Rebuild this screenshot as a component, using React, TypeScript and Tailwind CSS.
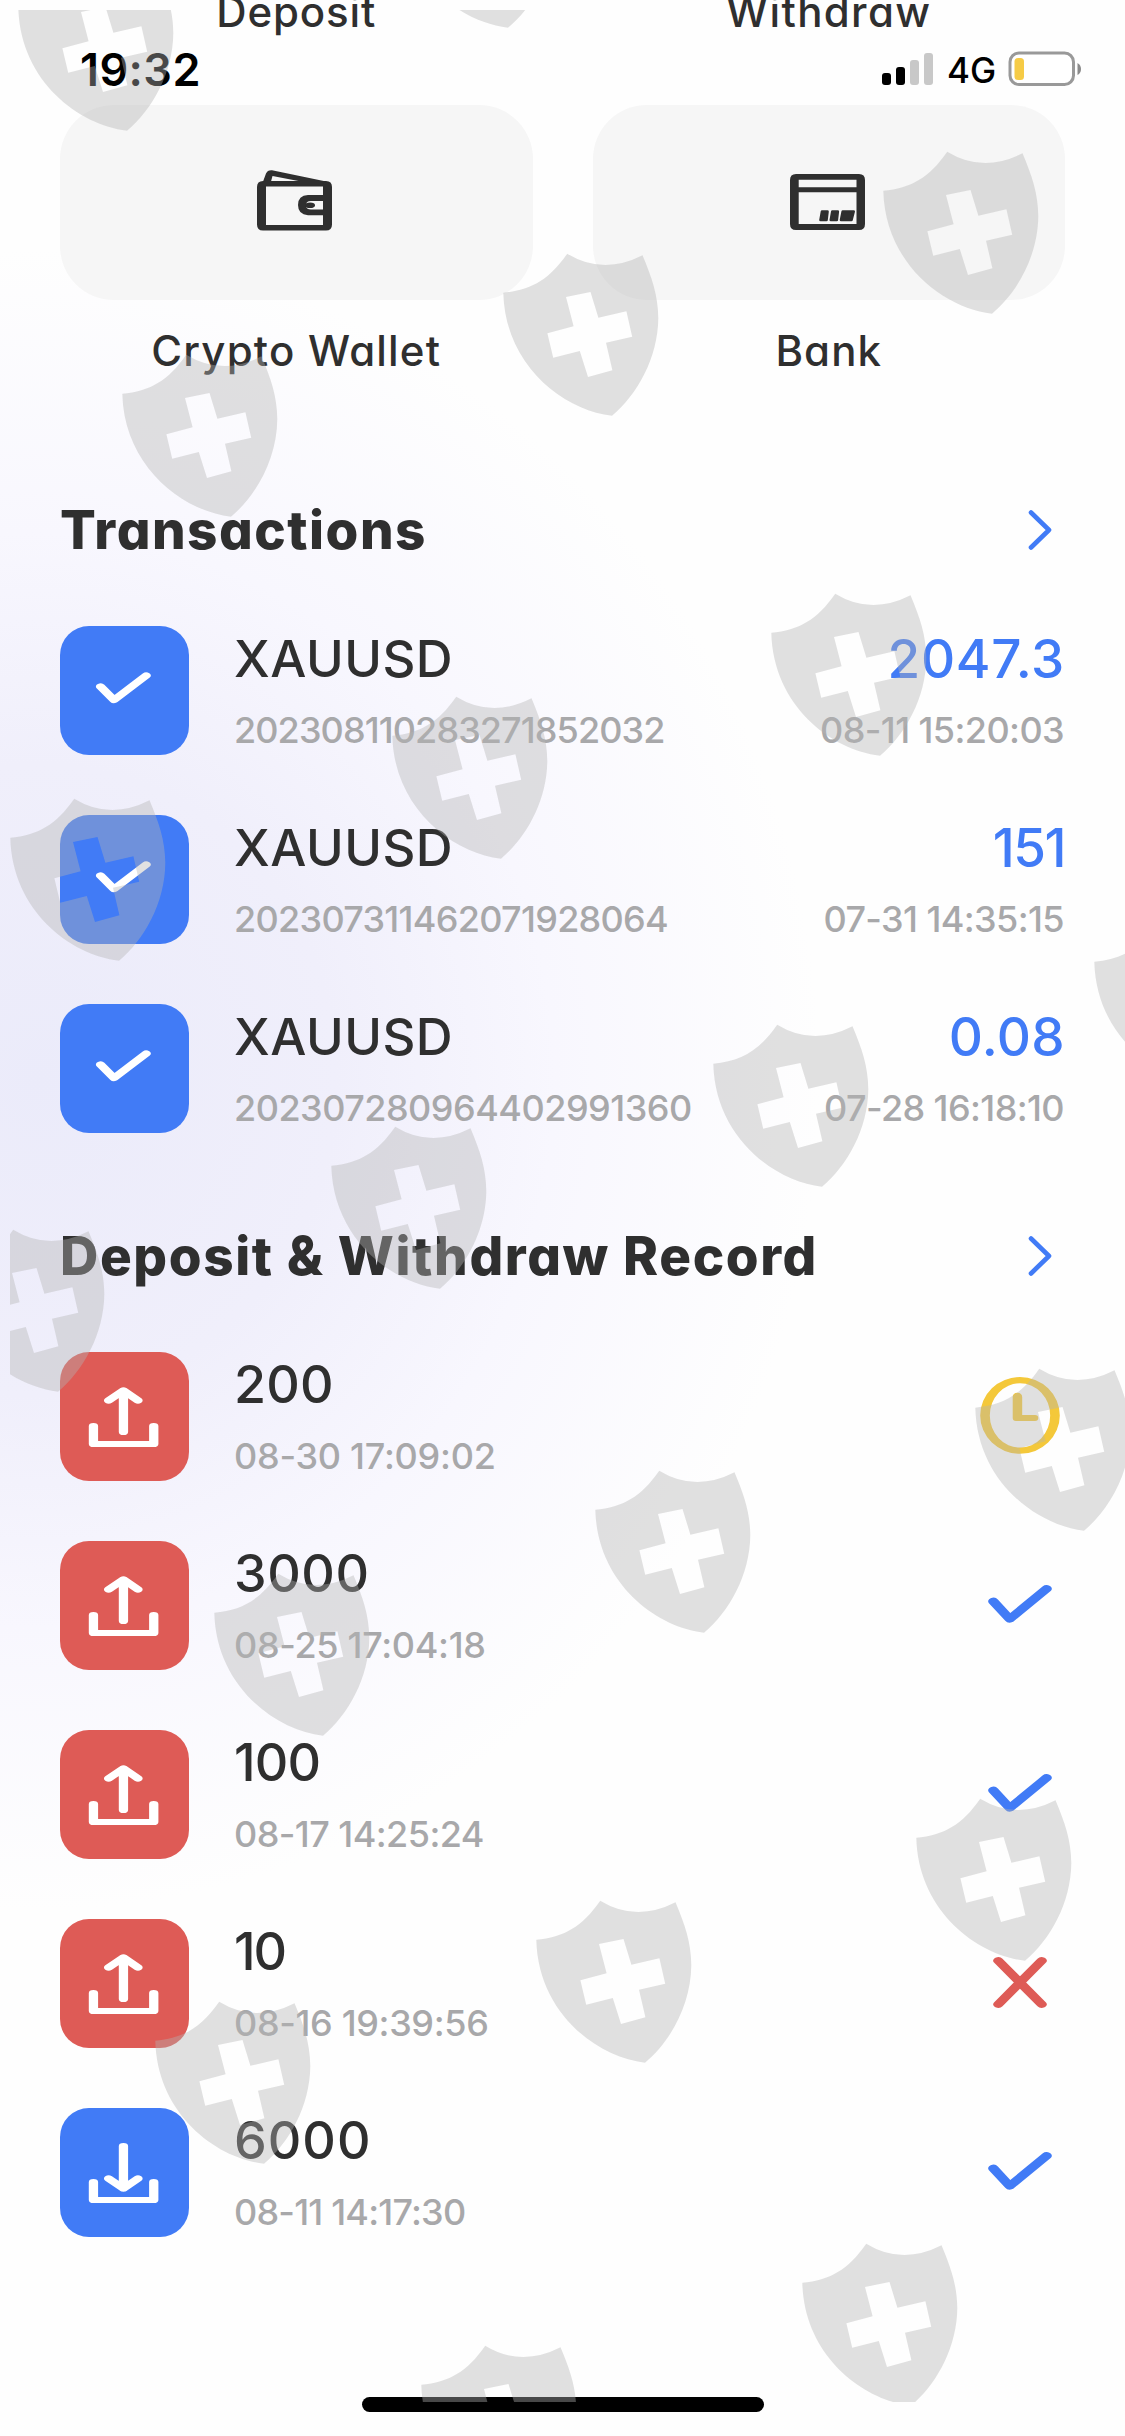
import type { ReactNode } from "react";

const transactions = [
  {
    symbol: "XAUUSD",
    id: "202308110283271852032",
    idClass: "tracking-[-0.9px]",
    amount: "2047.3",
    amountClass: "tracking-[0.7px]",
    time: "08-11 15:20:03",
  },
  {
    symbol: "XAUUSD",
    id: "202307311462071928064",
    idClass: "tracking-[-0.7px]",
    amount: "151",
    amountClass: "tracking-[-1.5px]",
    time: "07-31 14:35:15",
  },
  {
    symbol: "XAUUSD",
    id: "202307280964402991360",
    idClass: "tracking-[-0.5px]",
    amount: "0.08",
    amountClass: "tracking-[0.3px]",
    time: "07-28 16:18:10",
  },
];

type Status = "pending" | "done" | "failed";

const records: {
  amount: string;
  time: string;
  type: "withdraw" | "deposit";
  status: Status;
  amountClass: string;
  timeClass: string;
}[] = [
  { amount: "200", time: "08-30 17:09:02", type: "withdraw", status: "pending", amountClass: "tracking-[0.2px]", timeClass: "tracking-[-0.25px]" },
  { amount: "3000", time: "08-25 17:04:18", type: "withdraw", status: "done", amountClass: "tracking-[0.6px]", timeClass: "tracking-[-0.32px]" },
  { amount: "100", time: "08-17 14:25:24", type: "withdraw", status: "done", amountClass: "tracking-[-0.8px]", timeClass: "tracking-[-0.56px]" },
  { amount: "10", time: "08-16 19:39:56", type: "withdraw", status: "failed", amountClass: "tracking-[-2px]", timeClass: "tracking-[-0.35px]" },
  { amount: "6000", time: "08-11 14:17:30", type: "deposit", status: "done", amountClass: "tracking-[1px]", timeClass: "tracking-[-0.8px]" },
];

// top-left corner of every shield in the overlay
const shields = [
  [18, -32], [399, -135],
  [883, 151], [503, 253], [122, 354],
  [771, 593], [392, 696], [10, 798],
  [1094, 922], [713, 1024], [331, 1126], [-51, 1229],
  [975, 1368], [595, 1470], [214, 1573],
  [916, 1798], [536, 1900], [155, 2001],
  [802, 2243], [421, 2345],
];

function WalletIcon() {
  return (
    <svg viewBox="0 0 75 61" className="mr-[4px] mb-[4px] h-[61px] w-[75px]" fill="#2f2f2f">
      <path
        fillRule="evenodd"
        d="M6 11H69Q75 11 75 17V54.500Q75 60.500 69 60.500H6Q0 60.500 0 54.500V17Q0 11 6 11ZM9 16.500V55H66V16.500Z"
      />
      <path
        fillRule="evenodd"
        d="M5.500 13L9 3.500Q10.500 -0.200 15 0.200L68 11.200L66 14H5.500ZM15.500 6L14 11.500H44Z"
      />
      <path fillRule="evenodd" d="M67 25H51Q41 25.500 41 35Q41 44.500 51 45.200H67V39.500H54Q49 39.500 49 35.200Q49 31 54 31H67Z" />
      <ellipse cx="53" cy="35.200" rx="5" ry="2.800" />
    </svg>
  );
}

function BankIcon() {
  return (
    <svg viewBox="0 0 75 56" className="mr-[3px] mb-[2px] h-[56px] w-[75px]" fill="#2f2f2f">
      <path
        fillRule="evenodd"
        d="M6 0H69Q75 0 75 6V50Q75 56 69 56H6Q0 56 0 50V6Q0 0 6 0ZM8.700 5.700V13.300H66.500V5.700ZM8.700 18.300V50H66.500V18.300Z"
      />
      <g stroke="#2f2f2f" strokeWidth="2.600" strokeLinejoin="round">
        <path d="M32 37.500H37.500L36.500 46H30.500Z" />
        <path d="M42.300 37.500H47.800L46.800 46H40.800Z" />
        <path d="M52.700 37.500H63.700L61.500 46H51Z" />
      </g>
    </svg>
  );
}

function ChevronIcon() {
  return (
    <svg viewBox="0 0 24 42" className="h-[42px] w-6" fill="none" stroke="#417bf6" strokeWidth="4.600" strokeLinecap="round" strokeLinejoin="round">
      <path d="M3 3.500L21 21L3 38.500" />
    </svg>
  );
}

// The tile glyphs are stretched 1.5x sideways, so vertical strokes come out wider.
function Tile({ color, children }: { color: string; children: ReactNode }) {
  return (
    <div className={`h-[129px] w-[129px] shrink-0 overflow-hidden rounded-[29px] ${color}`}>
      <svg
        viewBox="0 0 86 129"
        preserveAspectRatio="none"
        className="h-full w-full"
        fill="none"
        stroke="white"
        strokeWidth="6.200"
        strokeLinecap="round"
        strokeLinejoin="round"
      >
        {children}
      </svg>
    </div>
  );
}

function CheckTile() {
  return (
    <Tile color="bg-[#417bf6]">
      <path d="M27 60.500L36 74L57.500 49.500" />
    </Tile>
  );
}

function RecordTile({ type }: { type: "withdraw" | "deposit" }) {
  if (type === "deposit") {
    return (
      <Tile color="bg-[#417bf6]">
        <path d="M22.300 74V92H62.500V74M42.300 38V80.500M32.400 70.500L42.300 80.500L52 70.500" />
      </Tile>
    );
  }
  return (
    <Tile color="bg-[#de5b56]">
      <path d="M22.300 74V92H62.500V74M42.300 80V38.500M32.400 48.500L42.300 38.500L52 48.500" />
    </Tile>
  );
}

function StatusIcon({ status }: { status: Status }) {
  if (status === "pending") {
    return (
      <svg viewBox="0 0 80 77" className="h-[77px] w-20" fill="#f4c83a">
        <path
          fillRule="evenodd"
          d="M40 0A39.800 38.400 0 0 1 40 76.800A39.800 38.400 0 0 1 40 0ZM40 6.200A30.200 32.200 0 0 0 40 70.600A30.200 32.200 0 0 0 40 6.200Z"
        />
        <path d="M37.300 15.700C40.500 15.700 42.200 17.500 42.200 20V38H55Q58.300 38 58.300 41Q58.300 44 55 44H36Q32.700 44 32.700 41V20C32.700 17.500 34.500 15.700 37.300 15.700Z" />
      </svg>
    );
  }
  if (status === "failed") {
    return (
      <svg viewBox="0 0 36 51" preserveAspectRatio="none" className="h-[51px] w-[54px]" fill="none" stroke="#de5b56" strokeWidth="6.800" strokeLinecap="round">
        <path d="M3.500 3.700L32.500 47.300M32.500 3.700L3.500 47.300" />
      </svg>
    );
  }
  return (
    <svg viewBox="0 0 42.700 38" preserveAspectRatio="none" className="h-[38px] w-16" fill="none" stroke="#417bf6" strokeWidth="7" strokeLinecap="round" strokeLinejoin="round">
      <path d="M3.600 16.300L14.500 34L39.100 3.800" />
    </svg>
  );
}

function StatusBar() {
  return (
    <div className="absolute inset-x-0 top-0 flex h-[138px] items-start justify-between pt-[50px] pr-[43px] pl-[80px]">
      <span className="text-[45px] leading-[39px] font-semibold tracking-[0.4px] text-black">19:32</span>
      <div className="flex items-start">
        <div className="flex h-[35px] items-end gap-[5px]">
          <i className="h-3 w-[9px] rounded-[3px] bg-black" />
          <i className="h-[18px] w-[9px] rounded-[3px] bg-black" />
          <i className="h-[25px] w-[9px] rounded-[3px] bg-[#c8c8c8]" />
          <i className="h-8 w-[9px] rounded-[3px] bg-[#c8c8c8]" />
        </div>
        <span className="ml-[14px] w-[61px] text-[35px] leading-[41px] font-medium text-black">4G</span>
        <svg viewBox="0 0 74 36" className="mt-[1px] h-9 w-[74px]">
          <rect x="2" y="2" width="63.500" height="31.500" rx="9" fill="white" stroke="#999999" strokeWidth="3" />
          <rect x="6.500" y="7" width="9.500" height="22" rx="3.500" fill="#f6cb45" />
          <path d="M69.500 12Q73 14 73 18T69.500 24Z" fill="#8a8a8a" />
        </svg>
      </div>
    </div>
  );
}

function SectionHeader({ title, className }: { title: string; className: string }) {
  return (
    <div className="flex h-[60px] items-center justify-between pr-[13px]">
      <h2 className={`text-[53px] leading-[60px] font-extrabold whitespace-nowrap ${className}`}>{title}</h2>
      <ChevronIcon />
    </div>
  );
}

function ShieldOverlay() {
  return (
    <svg viewBox="10 10 1115 2392" className="pointer-events-none absolute top-[10px] left-[10px] h-[2392px] w-[1115px] overflow-hidden">
      {shields.map(([x, y]) => (
        <path
          key={`${x},${y}`}
          transform={`translate(${x} ${y})`}
          fill="#b3b3b3"
          fillOpacity="0.4"
          fillRule="evenodd"
          d="M0.300 39.700C28 37 46 27 64.200 0.700Q100 22.500 139.500 2.300C149 25 155 42 155.300 65C155 105 134 142 109 162.700C60 157 2 112 0.300 39.700ZM63 44L70.600 73.300L44.400 80.300L50.200 104.700L76.800 98L85 124L109.400 117.300L103 89.700L129.200 83.700L123.400 58.300L95.400 64.700L87.500 39Z"
        />
      ))}
    </svg>
  );
}

export default function App() {
  return (
    <div className="relative h-[2436px] w-[1125px] overflow-hidden bg-[#fefefe] bg-[radial-gradient(ellipse_780px_830px_at_40px_1080px,#ebebfa_0%,#f0effb_38%,#f8f7fe_66%,#fefefe_100%)] font-['Inter',sans-serif] text-[#2f2f2f]">
      <main className="flex flex-col px-[60px] [font-feature-settings:'cv11']">
        {/* Labels of the row scrolled off the top */}
        <div className="-mt-[12px] grid grid-cols-2 gap-[60px] text-center text-[42px] leading-[48px] font-medium">
          <span className="tracking-[0.9px]">Deposit</span>
          <span className="tracking-[1.35px]">Withdraw</span>
        </div>

        <div className="mt-[69px] grid grid-cols-2 gap-x-[60px] gap-y-[27px] text-center text-[42px] leading-[48px] font-medium">
          <div className="flex h-[195px] items-center justify-center rounded-[54px] bg-[#f6f6f6]">
            <WalletIcon />
          </div>
          <div className="flex h-[195px] items-center justify-center rounded-[54px] bg-[#f6f6f6]">
            <BankIcon />
          </div>
          <span className="tracking-[1.2px]">Crypto Wallet</span>
          <span className="tracking-[1.1px]">Bank</span>
        </div>

        <section className="mt-[125px]">
          <SectionHeader title="Transactions" className="tracking-[1.5px]" />
          <ul className="mt-[66px] flex flex-col gap-[60px]">
            {transactions.map((t) => (
              <li key={t.id} className="flex h-[129px]">
                <CheckTile />
                <div className="ml-[45px] flex flex-col pt-[3px]">
                  <span className="text-[51px] leading-[60px] font-medium tracking-[0.5px]">{t.symbol}</span>
                  <span className={`mt-[19px] text-[36px] leading-[44px] font-medium text-[#a8a8aa] ${t.idClass}`}>{t.id}</span>
                </div>
                <div className="ml-auto flex flex-col items-end pt-[3px]">
                  <span className={`text-[53px] leading-[60px] font-medium text-[#417bf6] ${t.amountClass}`}>{t.amount}</span>
                  <span className="mt-[19px] mr-[1px] text-[36px] leading-[44px] font-medium tracking-[-0.6px] text-[#a8a8aa]">{t.time}</span>
                </div>
              </li>
            ))}
          </ul>
        </section>

        <section className="mt-[93px]">
          <SectionHeader title="Deposit & Withdraw Record" className="tracking-[1.6px]" />
          <ul className="mt-[66px] flex flex-col gap-[60px]">
            {records.map((r) => (
              <li key={r.time} className="flex h-[129px]">
                <RecordTile type={r.type} />
                <div className="ml-[45px] flex flex-col pt-[3px]">
                  <span className={`text-[52px] leading-[60px] font-medium ${r.amountClass}`}>{r.amount}</span>
                  <span className={`mt-[19px] text-[36px] leading-[44px] font-medium text-[#a8a8aa] ${r.timeClass}`}>{r.time}</span>
                </div>
                <div className="ml-auto flex h-[126px] w-[90px] items-center justify-center">
                  <StatusIcon status={r.status} />
                </div>
              </li>
            ))}
          </ul>
        </section>
      </main>

      <StatusBar />

      {/* Home indicator */}
      <div className="absolute bottom-6 left-[362px] h-[15px] w-[402px] rounded-full bg-black" />

      <ShieldOverlay />
    </div>
  );
}
